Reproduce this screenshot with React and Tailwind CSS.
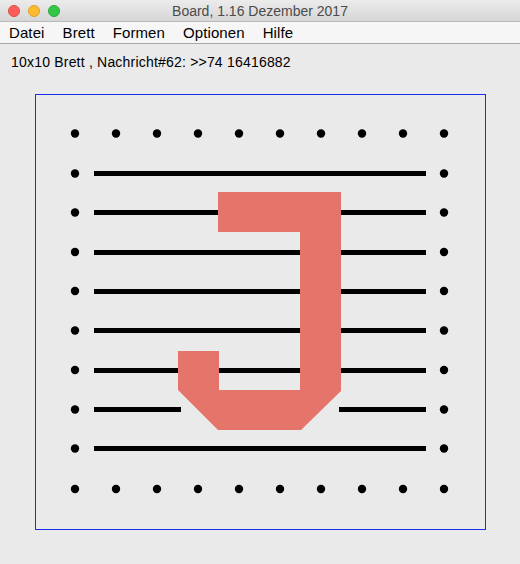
import React from "react";

// grid geometry of the board drawing (page coordinates)
const COLS = [75, 116, 157, 198, 239, 280, 321, 362, 403, 444];
const ROWS = [133.5, 173.5, 212.5, 252, 291, 330.5, 370, 409.5, 448.5, 489];

const MENU = ["Datei", "Brett", "Formen", "Optionen", "Hilfe"];

const Board = () => {
  const dots = [];
  ROWS.forEach((y, r) => {
    COLS.forEach((x, c) => {
      const edgeRow = r === 0 || r === ROWS.length - 1;
      const edgeCol = c === 0 || c === COLS.length - 1;
      if (edgeRow || edgeCol) dots.push(<circle key={`${r}-${c}`} cx={x} cy={y} r="4.2" fill="#000" />);
    });
  });

  // horizontal strokes, row 7 is broken around the J
  const lines = [];
  ROWS.slice(1, 9).forEach((y, i) => {
    if (i === 6) {
      lines.push(<rect key="l7a" x="94" y={y - 2.5} width="87" height="5" fill="#000" />);
      lines.push(<rect key="l7b" x="339" y={y - 2.5} width="87" height="5" fill="#000" />);
    } else {
      lines.push(<rect key={`l${i}`} x="94" y={y - 2.5} width="332" height="5" fill="#000" />);
    }
  });

  return (
    <svg width="449" height="434" viewBox="36 95 449 434">
      {dots}
      <g shapeRendering="crispEdges">{lines}</g>
      <polygon
        points="218,192 341,192 341,391 301,430 218,430 178,390 178,351 219,351 219,390 300,390 300,232 218,232"
        fill="#e5756a"
      />
    </svg>
  );
};

const App = () => {
  return (
    <div className="w-[520px] h-[564px] bg-[#eaeaea] overflow-hidden font-['Liberation_Sans',Arial,sans-serif]">
      {/* title bar */}
      <div className="relative h-[22px] flex items-center justify-center bg-gradient-to-b from-[#ececec] to-[#d6d6d6] border-b border-[#b9b9b9]">
        <div className="absolute left-[8px] top-[5px] flex gap-[8px]">
          <span className="w-[12px] h-[12px] rounded-full bg-[#fc5f57] border border-[#de4a43]" />
          <span className="w-[12px] h-[12px] rounded-full bg-[#fdbb2e] border border-[#de9f23]" />
          <span className="w-[12px] h-[12px] rounded-full bg-[#33c748] border border-[#27a83a]" />
        </div>
        <span className="text-[14px] text-[#4b4b4b] leading-none">Board, 1.16 Dezember 2017</span>
      </div>

      {/* menu bar */}
      <div className="h-[22px] flex items-center bg-[#f6f6f6] border-b border-[#a9a9a9]">
        {MENU.map((m) => (
          <span key={m} className="px-[9px] text-[15px] tracking-[0.1px] text-black leading-none">
            {m}
          </span>
        ))}
      </div>

      <p className="mt-[8px] pl-[11px] h-[20px] leading-[20px] text-[14px] tracking-[0.2px] text-black">
        10x10 Brett , Nachricht#62: &gt;&gt;74 16416882
      </p>

      <div className="ml-[35px] mt-[22px] w-[451px] h-[436px] border border-[#1530e6]">
        <Board />
      </div>
    </div>
  );
};

export default App;
